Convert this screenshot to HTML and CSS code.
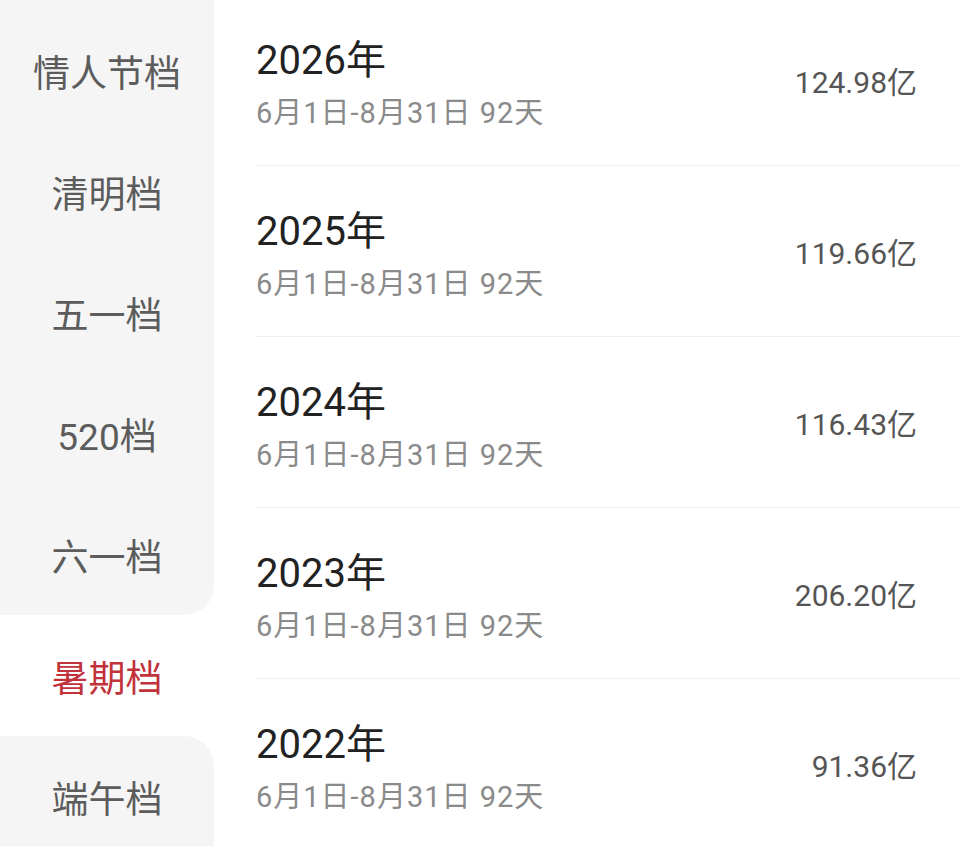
FILE: index.html
```html
<!DOCTYPE html>
<html lang="zh-CN">
<head>
    <meta charset="UTF-8">
    <meta name="viewport" content="width=device-width, initial-scale=1.0">
    <title>档期票房</title>
    <link rel="stylesheet" href="styles.css">
</head>
<body>
    <div class="page">
        <div class="side">
            <div class="tab">情人节档</div>
            <div class="tab">清明档</div>
            <div class="tab">五一档</div>
            <div class="tab">520档</div>
            <div class="tab before-active">六一档</div>
            <div class="tab active">暑期档</div>
            <div class="tab after-active">端午档</div>
        </div>
        <div class="list">
            <div class="row">
                <div class="info">
                    <div class="year">2026年</div>
                    <div class="range">6月1日-8月31日 92天</div>
                </div>
                <div class="total">124.98亿</div>
            </div>
            <div class="row">
                <div class="info">
                    <div class="year">2025年</div>
                    <div class="range">6月1日-8月31日 92天</div>
                </div>
                <div class="total">119.66亿</div>
            </div>
            <div class="row">
                <div class="info">
                    <div class="year">2024年</div>
                    <div class="range">6月1日-8月31日 92天</div>
                </div>
                <div class="total">116.43亿</div>
            </div>
            <div class="row">
                <div class="info">
                    <div class="year">2023年</div>
                    <div class="range">6月1日-8月31日 92天</div>
                </div>
                <div class="total">206.20亿</div>
            </div>
            <div class="row">
                <div class="info">
                    <div class="year">2022年</div>
                    <div class="range">6月1日-8月31日 92天</div>
                </div>
                <div class="total">91.36亿</div>
            </div>
        </div>
    </div>
</body>
</html>
```

FILE: styles.css
```css
html, body {margin: 0; padding: 0; background: #ffffff;}
body {font-family: Roboto, "Noto Sans CJK SC", sans-serif; height: 846px; overflow: hidden;}
.page {display: flex; height: 846px; overflow: hidden;}

/* left tabs */
.side {width: 214px; flex-shrink: 0; background: #ffffff;}
.side::before {content: ""; display: block; height: 10px; background: #f5f5f5;}
.tab {height: 121px; display: flex; align-items: center; justify-content: center; background: #f5f5f5; color: #5c5c5c; font-size: 37px;}
.tab.active {background: #ffffff; color: #c1323b;}
.tab.before-active {border-bottom-right-radius: 30px;}
.tab.after-active {border-top-right-radius: 30px;}

/* right list */
.list {flex: 1; margin-top: -5px;}
.row {display: flex; align-items: center; justify-content: space-between; height: 170px; margin-left: 42px; padding-right: 43px; border-bottom: 1px solid #efefef;}
.info {align-self: flex-start; display: flex; flex-direction: column; gap: 10px; padding-top: 42px;}
.year {font-size: 40px; line-height: 48px; color: #222222;}
.range {font-size: 29px; line-height: 36px; color: #8a8a8a; letter-spacing: 1px;}
.total {font-size: 30px; color: #555555;}
```
